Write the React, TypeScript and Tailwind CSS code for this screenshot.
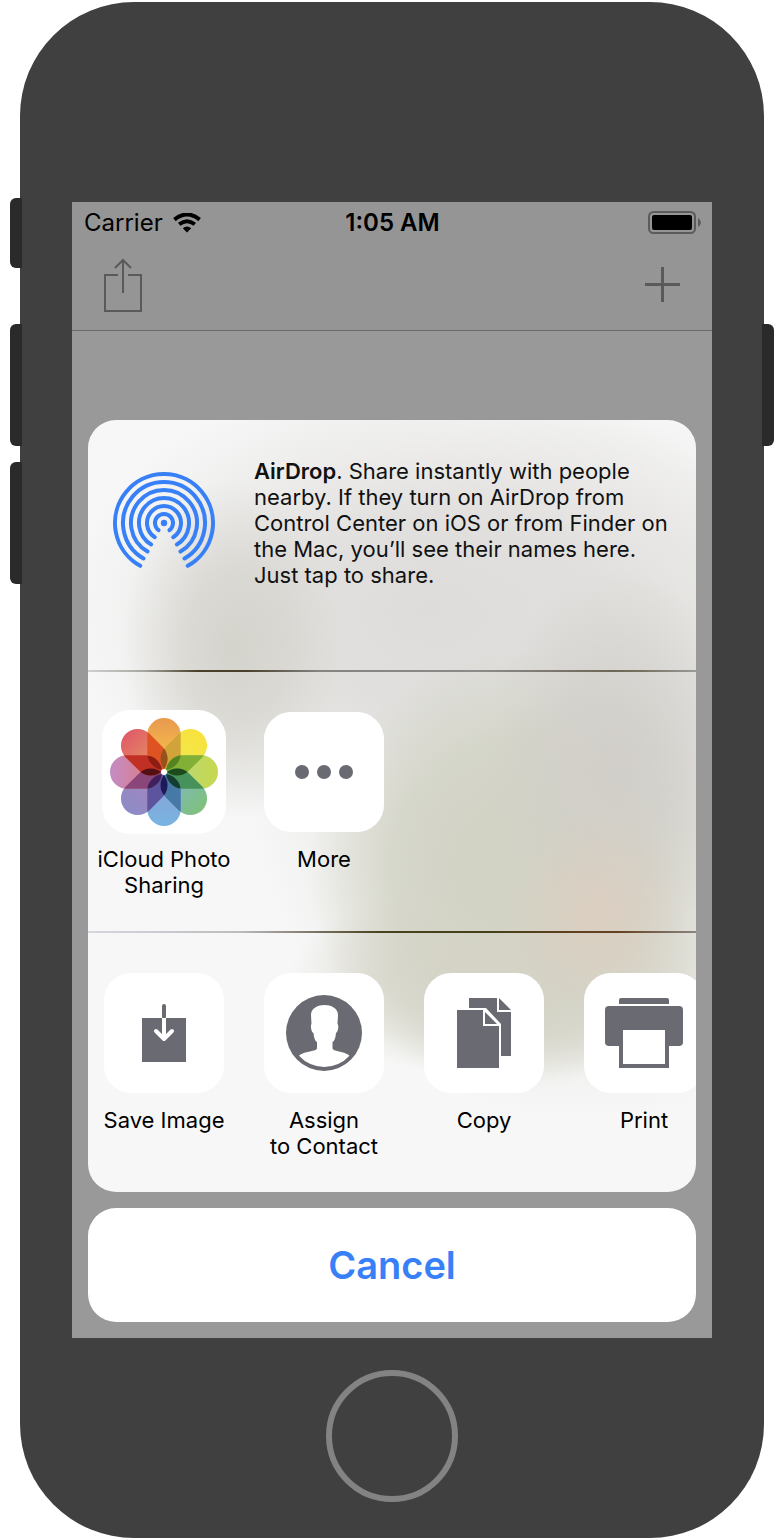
import React from "react";

const PETALS = [
  { a: 0, from: "#e8994e", to: "#f6c04c", mix: "#d0a43a", core: "#95521a" },
  { a: 45, from: "#f8e23c", to: "#f0e84f", mix: "#82b036", core: "#55831f" },
  { a: 90, from: "#c8d84e", to: "#b9d878", mix: "#46925a", core: "#1c4a1a" },
  { a: 135, from: "#7fc07c", to: "#7fb9bd", mix: "#4679a5", core: "#123d30" },
  { a: 180, from: "#78b4e2", to: "#88a3d4", mix: "#5c549c", core: "#1c1a58" },
  { a: 225, from: "#8c8cc6", to: "#a585be", mix: "#8a4678", core: "#40205c" },
  { a: 270, from: "#c48cc4", to: "#dc7c84", mix: "#c13024", core: "#521014" },
  { a: 315, from: "#e05c68", to: "#e59162", mix: "#df5323", core: "#8c1c14" },
];

function Petal({ a, fill, clip }: { a: number; fill?: string; clip?: string }) {
  return (
    <g clipPath={clip}>
      <rect x="-16.7" y="-54" width="33.4" height="52" rx="16.7" fill={fill} transform={`rotate(${a})`} />
    </g>
  );
}

function PhotosIcon() {
  return (
    <svg viewBox="-62 -62 124 124" className="size-[124px]" aria-hidden="true">
      <defs>
        {PETALS.map((p, i) => (
          <React.Fragment key={p.a}>
            <linearGradient id={`petal-${i}`} x1="0" y1="0" x2="0" y2="1">
              <stop offset="0" stopColor={p.from} />
              <stop offset="0.8" stopColor={p.to} />
            </linearGradient>
            <clipPath id={`clip-${i}`}>
              <rect x="-16.7" y="-54" width="33.4" height="52" rx="16.7" transform={`rotate(${p.a})`} />
            </clipPath>
          </React.Fragment>
        ))}
      </defs>
      {PETALS.map((p, i) => <Petal key={p.a} a={p.a} fill={`url(#petal-${i})`} />)}
      {PETALS.map((p, i) => <Petal key={p.a} a={p.a} fill={p.mix} clip={`url(#clip-${(i + 1) % 8})`} />)}
      {PETALS.map((p, i) => <Petal key={p.a} a={p.a - 45} fill={p.core} clip={`url(#clip-${(i + 1) % 8})`} />)}
      <circle r="3" fill="#fff" />
    </svg>
  );
}

function AirDropIcon() {
  const rings = [
    [9, 37], [17, 33], [25, 31], [33, 30], [41, 30], [49, 29],
  ];
  return (
    <svg viewBox="-52 -52 104 104" className="size-[104px]" fill="none" stroke="#3880f7" strokeWidth="4" strokeLinecap="round" aria-hidden="true">
      <circle r="3.2" fill="#3880f7" stroke="none" />
      {rings.map(([r, deg]) => {
        const t = (deg * Math.PI) / 180;
        const x = r * Math.sin(t);
        const y = r * Math.cos(t);
        return <path key={r} d={`M${-x} ${y}A${r} ${r} 0 1 1 ${x} ${y}`} />;
      })}
    </svg>
  );
}

function MoreIcon() {
  return (
    <svg viewBox="0 0 120 120" className="size-[120px]" fill="#6a6a72" aria-hidden="true">
      <circle cx="38" cy="60" r="7" /><circle cx="60" cy="60" r="7" /><circle cx="82" cy="60" r="7" />
    </svg>
  );
}

function SaveIcon() {
  return (
    <svg viewBox="0 0 120 120" className="size-[120px]" fill="none" strokeWidth="4" strokeLinecap="round" strokeLinejoin="round" aria-hidden="true">
      <path d="M38 45H82V89H38Z" fill="#6a6a72" />
      <path d="M60 33V44" stroke="#6a6a72" />
      <path d="M58 45h4v3h-4Z" fill="#fff" />
      <path d="M60 47V66M52 58L60 66L68 58" stroke="#fff" />
    </svg>
  );
}

function ContactIcon() {
  return (
    <svg viewBox="0 0 120 120" className="size-[120px]" aria-hidden="true">
      <circle cx="60" cy="60" r="38" fill="#6a6a72" />
      <path fill="#fff" d="M60.500 32C54 32 47 35 47 42L47.500 51C46.300 52 47 59 49.500 60C50 65 51 68 53 69V75C53 79 41 77.500 35 82.700A34 34 0 0 0 85.500 82.700C79.500 77.500 68.500 79 68.500 75V69C70.500 68 71.500 65 72 60C74.300 59 75 52 73.500 51L74 42C74 35 67 32 60.500 32Z" />
    </svg>
  );
}

function CopyIcon() {
  return (
    <svg viewBox="0 0 120 120" className="size-[120px]" fill="#6a6a72" aria-hidden="true">
      <path d="M45 25H73V39H87V83H77V51L62 35H45Z" />
      <path d="M75 25L87 37H75Z" />
      <path d="M33 37H59V53H75V95H33Z" />
      <path d="M61 39L73 51H61Z" />
    </svg>
  );
}

function PrintIcon() {
  return (
    <svg viewBox="0 0 120 120" className="size-[120px]" fill="#6a6a72" aria-hidden="true">
      <path d="M35 31V27Q35 25 37 25H83Q85 25 85 27V31Z" />
      <rect x="21" y="33" width="78" height="40" rx="4" />
      <path d="M35 57H85V95H35Z" />
      <path d="M39 57H81V91H39Z" fill="#fff" />
    </svg>
  );
}

function ShareItem({ label, children, large }: { label: React.ReactNode; children: React.ReactNode; large?: boolean }) {
  return (
    <button type="button" className="flex w-40 shrink-0 flex-col items-center text-[22px] leading-[26px] text-black">
      <span className={large ? "-my-0.5 overflow-hidden rounded-[28px] bg-white" : "overflow-hidden rounded-[27px] bg-white"}>
        {children}
      </span>
      <span className="mt-3.5">{label}</span>
    </button>
  );
}

export default function App() {
  return (
    <main className="flex min-h-screen justify-center bg-white px-5 py-0.5 font-['Inter','Liberation_Sans',sans-serif]">
      <div className="relative flex w-full max-w-[744px] flex-col items-center rounded-[114px] bg-[#404040] px-[52px] pt-[200px] pb-9">
        <span className="absolute top-[196px] -left-2.5 h-[70px] w-3 rounded-l-md bg-[#2a2a2a]" />
        <span className="absolute top-[322px] -left-2.5 h-[122px] w-3 rounded-l-md bg-[#2a2a2a]" />
        <span className="absolute top-[460px] -left-2.5 h-[122px] w-3 rounded-l-md bg-[#2a2a2a]" />
        <span className="absolute top-[322px] -right-2.5 h-[122px] w-3 rounded-r-md bg-[#2a2a2a]" />

        <div className="flex w-full flex-col bg-[#999999] pb-4">
          <header className="border-b border-[#6b6b6b] bg-[#959595]">
            <div className="grid h-[42px] grid-cols-3 items-center pr-[11px] pl-3 text-[24px] leading-10 text-black">
              <div className="flex items-center gap-2.5">
                <span>Carrier</span>
                <svg viewBox="0 0 28 20" className="h-5 w-7" fill="none" stroke="#000" strokeWidth="4" aria-hidden="true">
                  <path d="M1.400 6.600Q14 -3.600 26.600 6.600" />
                  <path d="M6.200 11.300Q14 5.100 21.800 11.300" />
                  <path d="M9.800 15.200Q14 12 18.200 15.200L14 19.500Z" fill="#000" stroke="none" />
                </svg>
              </div>
              <span className="text-center font-semibold">1:05 AM</span>
              <svg viewBox="0 1 54 24" className="h-6 w-[54px] justify-self-end" aria-hidden="true">
                <rect x="2" y="2" width="46" height="21" rx="4.500" fill="none" stroke="#5b5b5b" strokeWidth="2" />
                <rect x="5" y="5" width="40" height="15" rx="2" fill="#000" />
                <path d="M51 8Q54 10 54 12.500T51 17Z" fill="#5b5b5b" />
              </svg>
            </div>
            <div className="flex h-[86px] items-center justify-between px-8 pb-1">
              <button type="button" aria-label="Share">
                <svg viewBox="0 0 38 54" className="h-[54px] w-[38px]" fill="none" stroke="#5a5a5a" strokeWidth="2" aria-hidden="true">
                  <path d="M14 17H1V53H37V17H24M19 35V2M11 10L19 2L27 10" />
                </svg>
              </button>
              <button type="button" aria-label="Add">
                <svg viewBox="0 0 36 36" className="size-9" stroke="#5a5a5a" strokeWidth="3" aria-hidden="true">
                  <path d="M1 17.500H36M18.500 0V35" />
                </svg>
              </button>
            </div>
          </header>

          <section aria-label="Share sheet" className="mx-4 mt-[89px] overflow-hidden rounded-[28px] bg-[#f7f7f7] bg-[radial-gradient(ellipse_90px_100px_at_510px_490px,#ddcdbecc,#ddcdbe00),radial-gradient(ellipse_130px_190px_at_530px_340px,#d0cdc8e6,#d0cdc899_50%,#d0cdc800),radial-gradient(ellipse_230px_100px_at_430px_560px,#d4d3c6f2_20%,#d4d3c6b3_55%,#d4d3c600),radial-gradient(ellipse_210px_220px_at_430px_450px,#d2d3c5ff_25%,#d2d3c5cc_60%,#d2d3c500),radial-gradient(ellipse_110px_170px_at_145px_230px,#d0cfc7d9,#d0cfc799_45%,#d0cfc700),radial-gradient(ellipse_360px_240px_at_340px_190px,#dddcdaff,#dfdedcd9_40%,#e4e3e180_70%,#e6e5e300),radial-gradient(ellipse_340px_360px_at_500px_340px,#e5e4e1_50%,#e5e4e180_75%,#e5e4e100)]">
            <div className="flex h-[250px] items-start pt-[38px] pr-4 pl-6">
              <div className="mt-[13px] shrink-0"><AirDropIcon /></div>
              <p className="ml-[38px] text-[22px] leading-[26px] text-[#111111]">
                <strong className="font-semibold">AirDrop</strong>. Share instantly with people<br />
                nearby. If they turn on AirDrop from<br />
                Control Center on iOS or from Finder on<br />
                the Mac, you’ll see their names here.<br />
                Just tap to share.
              </p>
            </div>
            <div className="h-0.5 bg-[linear-gradient(90deg,#cfcfcf_0%,#a8a8a2_9%,#48402a_18%,#48402a_26%,#858483_38%,#8c8a8a_65%,#6f6858_86%,#77715f_91%,#9a9a98_100%)]" />
            <div className="-ml-1 flex h-[259px] items-start pt-10">
              <ShareItem large label={<>iCloud Photo<br />Sharing</>}><PhotosIcon /></ShareItem>
              <ShareItem label="More"><MoreIcon /></ShareItem>
            </div>
            <div className="h-0.5 bg-[linear-gradient(90deg,#d6d6df_0%,#bcbcbe_25%,#777061_38%,#48421d_48%,#424119_65%,#64401f_82%,#64401f_87%,#8c8582_100%)]" />
            <div className="-ml-1 flex h-[259px] items-start pt-10">
              <ShareItem label="Save Image"><SaveIcon /></ShareItem>
              <ShareItem label={<>Assign<br />to Contact</>}><ContactIcon /></ShareItem>
              <ShareItem label="Copy"><CopyIcon /></ShareItem>
              <ShareItem label="Print"><PrintIcon /></ShareItem>
            </div>
          </section>
          <button type="button" className="mx-4 mt-4 h-[114px] rounded-[28px] bg-white text-[38px] leading-[48px] font-semibold text-[#3880f7]">Cancel</button>
        </div>
        <button type="button" aria-label="Home" className="mt-8 size-[132px] rounded-full border-6 border-[#838383]" />
      </div>
    </main>
  );
}
